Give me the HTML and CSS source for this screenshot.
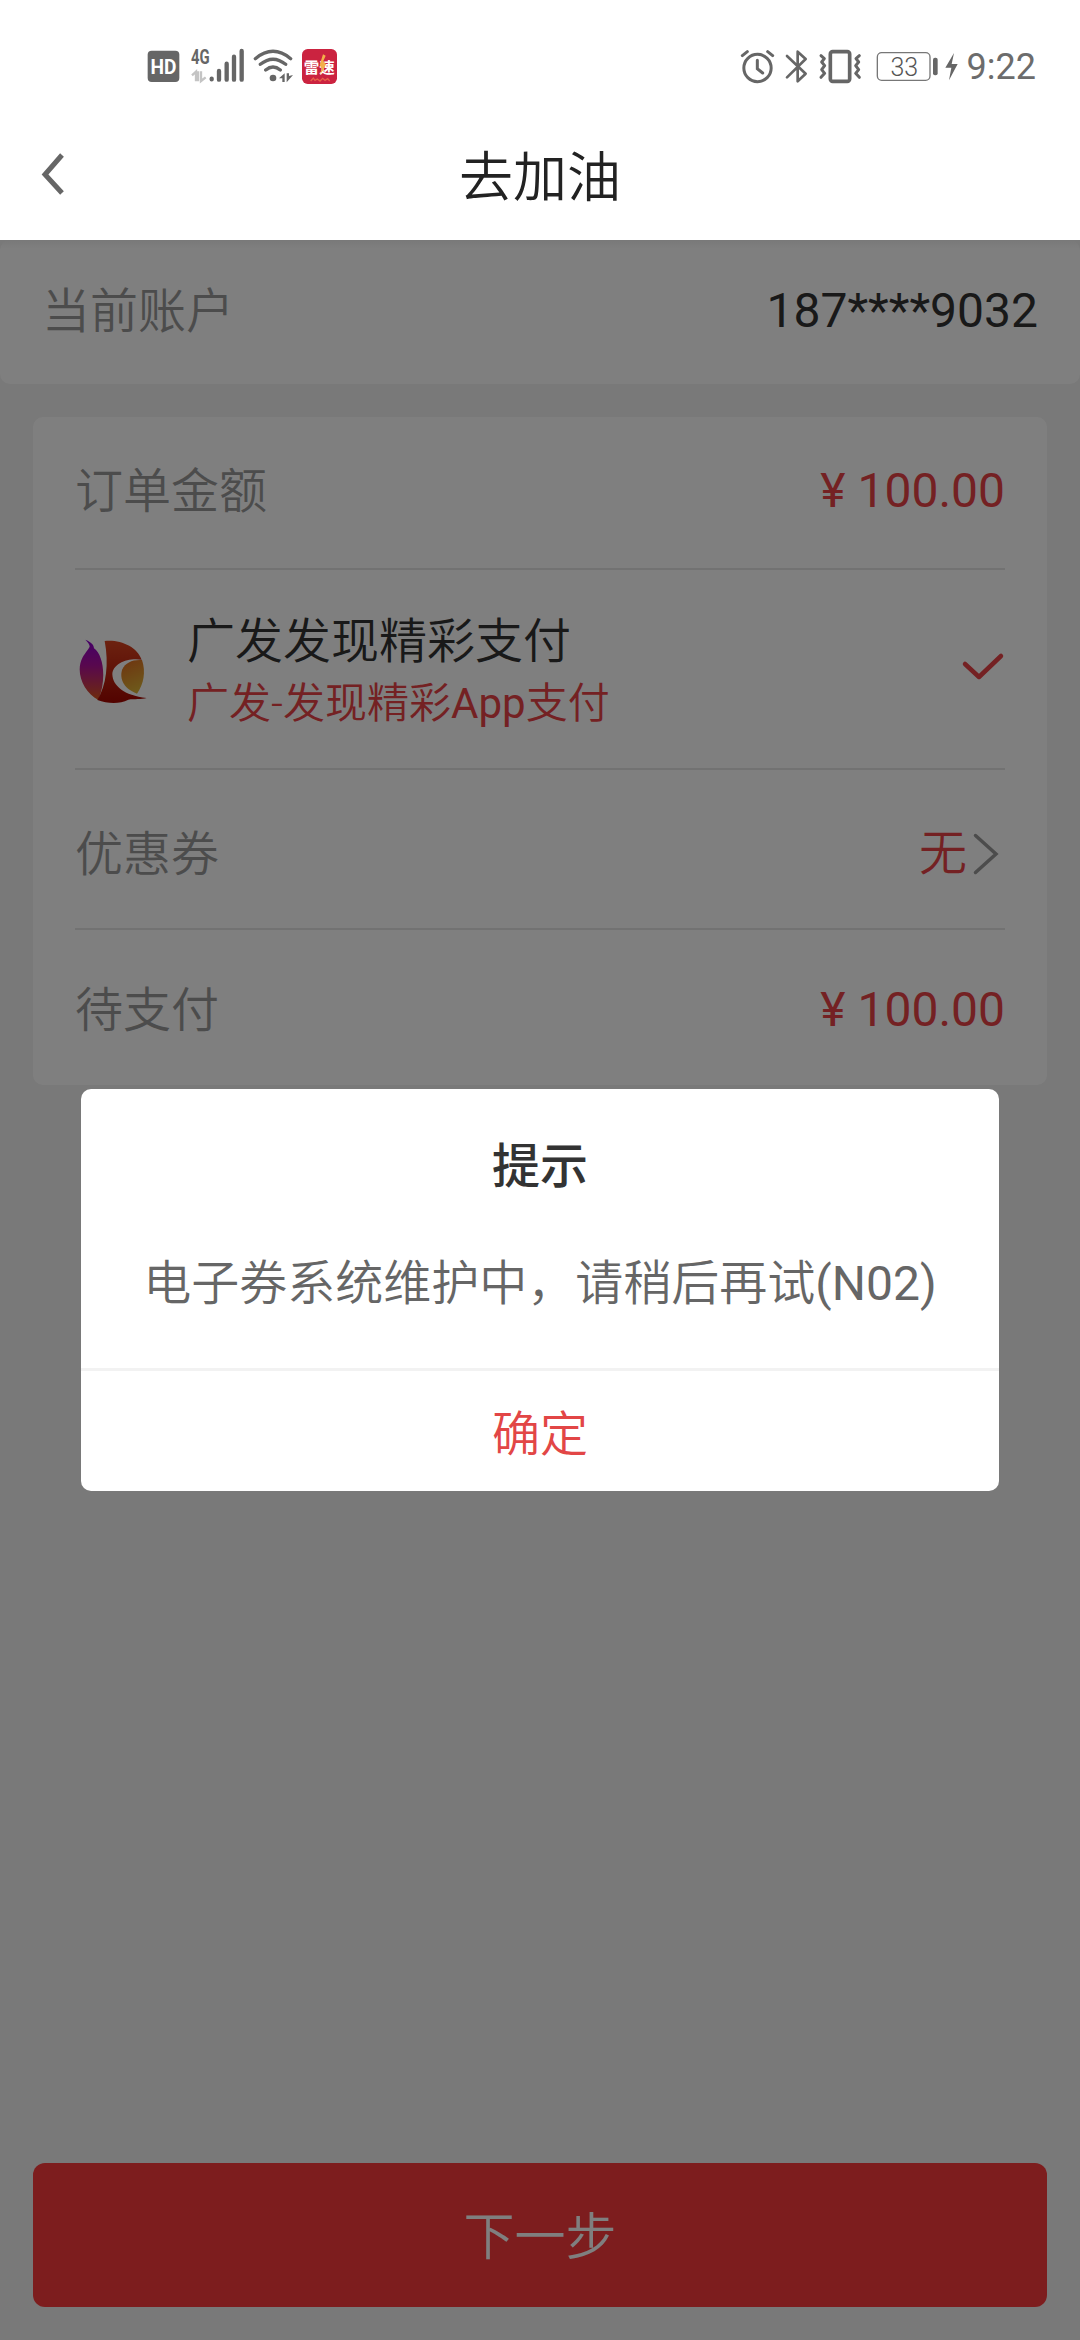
FILE: index.html
```html
<!DOCTYPE html>
<html lang="zh-CN">
<head>
<meta charset="utf-8">
<title>去加油</title>
<link rel="stylesheet" href="styles.css">
</head>
<body>
<div class="page">
  <header class="header">
    <div class="status">
      <div class="status-left">
        <svg width="33" height="40" viewBox="51 48 99 120">
          <rect x="53" y="62" width="95" height="94" rx="12" fill="#666"/>
          <text x="100.500" y="132" class="hd" textLength="78" lengthAdjust="spacingAndGlyphs">HD</text>
        </svg>
        <svg class="signal" width="56" height="40" viewBox="180 48 168 120">
          <text x="183" y="101" class="net" textLength="56" lengthAdjust="spacingAndGlyphs">4G</text>
          <path d="M186 136l12-11v29M204 124v30M213 124v29l14-11" fill="none" stroke="#c4c4c4" stroke-width="7"/>
          <path d="M245 146v2M267 123v26M290 101v48M312 80v69M335 63v86" stroke="#666" stroke-width="13" stroke-linecap="round"/>
        </svg>
        <svg class="wifi" width="41" height="40" viewBox="369 48 123 120">
          <g fill="none" stroke="#666" stroke-width="10" stroke-linecap="round"><path d="M376 86Q429 42 482 86M391 103Q429 72 467 103M407 120Q429 102 451 120"/></g>
          <circle cx="429" cy="144" r="10" fill="#666"/>
          <path d="M447 145l17-15v26h-7v-11zM470 130h7v8l12-3-19 22z" fill="#666"/>
        </svg>
        <svg class="app" width="37" height="40" viewBox="513 48 111 120">
          <rect x="516" y="57" width="105" height="105" rx="17" fill="#cb2340"/>
          <text x="521" y="130" class="app-name" textLength="93" lengthAdjust="spacingAndGlyphs">雷速</text>
          <path d="M579 73l8 4-7 16 8 10-8 17-10 13 5-17-6-11z" fill="#f3b04a"/>
          <path d="M542 153l8-9 5 7 7-4 8 6 8-8 7 6 8-5 6 7" fill="none" stroke="#e8604a" stroke-width="4"/>
        </svg>
      </div>
      <div class="status-right">
        <svg width="35" height="40" viewBox="57 48 105 120">
          <g fill="none" stroke="#666" stroke-width="9" stroke-linecap="round"><circle cx="109.500" cy="114" r="41"/><path d="M109 91v25l16 13M64 77l15-12M155 77l-15-12"/></g>
        </svg>
        <svg class="bt" width="23" height="40" viewBox="192 48 69 120">
          <path d="M198 78l56 53-24 23V65l24 22-56 55" fill="none" stroke="#666" stroke-width="8" stroke-linecap="round" stroke-linejoin="round"/>
        </svg>
        <svg class="vibrate" width="44" height="40" viewBox="291 48 132 120">
          <g fill="none" stroke="#666" stroke-linejoin="round" stroke-linecap="round"><rect x="328" y="65" width="58" height="89" rx="7" stroke-width="11"/><path d="M300 77l10 9-8 10 9 11-9 12 9 11-11 12M415 77l-10 9 8 10-9 11 9 12-9 11 11 12" stroke-width="9"/></g>
        </svg>
        <svg class="battery" width="63" height="40" viewBox="465 48 189 120">
          <rect x="469" y="68" width="158" height="83" rx="13" fill="none" stroke="#777" stroke-width="4"/>
          <rect x="636" y="83" width="14" height="53" rx="6" fill="#666"/>
          <text x="550" y="137" class="level">33</text>
        </svg>
        <svg class="bolt" width="14" height="40" viewBox="672 48 42 120"><path d="M699 69l-26 44h18l-7 38 26-49h-18z" fill="#666"/></svg>
        <span class="time">9:22</span>
      </div>
    </div>
    <div class="nav">
      <svg class="back" width="26" height="44" viewBox="0 0 26 44"><path d="M22 3L5 22.500 22 41" fill="none" stroke="#666" stroke-width="5"/></svg>
      <h1 class="title">去加油</h1>
    </div>
  </header>

  <main class="content">
    <section class="account">
      <span class="label">当前账户</span>
      <span class="phone">187****9032</span>
    </section>
    <section class="order">
      <div class="row row-amount">
        <span class="label">订单金额</span>
        <span class="price">¥ 100.00</span>
      </div>
      <div class="row row-pay">
        <svg class="logo" width="72" height="68" viewBox="26 54 216 204">
          <defs>
            <linearGradient id="purple" x1="0" y1="0" x2="0" y2="1"><stop offset="0" stop-color="#8a00d0"/><stop offset=".42" stop-color="#b0109e"/><stop offset="1" stop-color="#dd5518"/></linearGradient>
            <linearGradient id="red" x1="0" y1="0" x2="0" y2="1"><stop offset="0" stop-color="#d94420"/><stop offset="1" stop-color="#a50600"/></linearGradient>
            <linearGradient id="gold" x1="0" y1="0" x2=".3" y2="1"><stop offset="0" stop-color="#de6820"/><stop offset="1" stop-color="#dcb035"/></linearGradient>
          </defs>
          <path d="M48 59C64 65 74 74 74 85C102 104 113 177 87 240C43 217 16 156 40 112C48 98 60 86 61 79C60 72 55 66 48 59z" fill="url(#purple)"/>
          <path d="M106 63C154 58 203 80 217 119C178 112 130 129 129 163C130 197 164 227 232 234C216 239 195 236 177 239C150 253 115 251 84 240C111 196 119 132 106 63z" fill="url(#red)"/>
          <path d="M218 120C230 155 223 193 203 221C159 205 150 172 159 148C168 128 190 118 218 120z" fill="url(#gold)"/>
        </svg>
        <div class="method">
          <span class="method-name">广发发现精彩支付</span>
          <span class="method-note">广发-发现精彩<span class="latin">App</span>支付</span>
        </div>
        <svg class="check" width="44" height="30" viewBox="0 0 44 30"><path d="M4 12l14 13L40 4" fill="none" stroke="#e94346" stroke-width="4.500" stroke-linecap="round" stroke-linejoin="round"/></svg>
      </div>
      <div class="row row-coupon">
        <span class="label">优惠券</span>
        <span class="coupon">无<svg width="26" height="42" viewBox="0 0 26 42"><path d="M2.500 2.500L23 21 2.500 39.500" fill="none" stroke="#999" stroke-width="3.500" stroke-linecap="round"/></svg></span>
      </div>
      <div class="row row-due">
        <span class="label">待支付</span>
        <span class="price">¥ 100.00</span>
      </div>
    </section>
    <button class="next">下一步</button>

    <div class="mask">
      <div class="dialog" role="dialog">
        <h2 class="dialog-title">提示</h2>
        <p class="dialog-text">电子券系统维护中，请稍后再试<span class="latin">(N02)</span></p>
        <button class="confirm">确定</button>
      </div>
    </div>
  </main>
</div>
</body>
</html>
```
FILE: styles.css
```css
* { box-sizing: border-box; }
body {
  margin: 0;
  font-family: Roboto, "Noto Sans CJK SC", sans-serif;
  font-size: 48px;
  font-weight: 400;
  color: #333;
}
svg { display: block; flex: none; }
h1, h2, p { margin: 0; font-weight: 400; }
button { border: 0; padding: 0; font-family: inherit; }
.label, .title, .method-name, .method-note, .coupon, .dialog-text, .confirm, .next { font-weight: 350; }
.latin { font-weight: 400; }

.page { display: flex; flex-direction: column; width: 1080px; height: 2340px; overflow: hidden; }

.header { height: 240px; background: #fff; }
.status {
  display: flex;
  justify-content: space-between;
  height: 112px;
  padding: 46px 44px 0 147px;
}
.status-left, .status-right { display: flex; height: 40px; }
.signal { margin-left: 10px; }
.wifi, .app { margin-left: 7px; }
.bt, .vibrate { margin-left: 10px; }
.battery { margin-left: 14px; }
.bolt { margin-left: 6px; }
.time { margin-left: 8px; font-size: 36px; line-height: 43px; color: #6c6c6c; }
.hd { font: 700 62px Roboto, sans-serif; fill: #fff; text-anchor: middle; }
.net { font: 700 60px Roboto, sans-serif; fill: #666; }
.app-name { font: 700 46px "Noto Sans CJK SC", sans-serif; fill: #fff; }
.level { font: 300 75px Roboto, sans-serif; fill: #555; text-anchor: middle; }

.nav {
  display: grid;
  grid-template-columns: 1fr auto 1fr;
  align-items: center;
  height: 128px;
  padding: 0 40px;
}
.back { margin-top: -4px; }
.title { padding-top: 6px; font-size: 54px; line-height: 80px; color: #222; }

.content {
  position: relative;
  display: flex;
  flex-direction: column;
  flex: 1;
  background: #f2f2f2;
}
.account {
  display: flex;
  align-items: center;
  justify-content: space-between;
  height: 144px;
  padding: 0 42px 2px;
  border-radius: 10px;
  background: linear-gradient(#f2f2f2, #fff 9px);
}
.label { padding-top: 2px; color: #999; line-height: 72px; }
.phone { color: #333; line-height: 72px; }

.order {
  height: 668px;
  margin: 33px 33px 0;
  padding: 0 42px;
  border-radius: 10px;
  background: #fff;
}
.row {
  display: flex;
  align-items: center;
  justify-content: space-between;
  border-bottom: 2px solid #e4e4e4;
}
.row-amount { height: 153px; padding-bottom: 4px; }
.row-pay { height: 200px; }
.row-coupon { height: 160px; padding-top: 9px; }
.row-due { height: 155px; padding-top: 4px; border: 0; }
.price { color: #e94346; }
.logo { margin: 6px 0 0 3px; }
.method { display: flex; flex-direction: column; flex: 1; margin-left: 37px; padding-top: 4px; }
.method-name { line-height: 66px; }
.method-note { font-size: 42px; line-height: 58px; color: #e94346; }
.check { margin: -4px 0 0; }
.coupon { display: flex; align-items: center; gap: 6px; margin-right: 6px; line-height: 72px; color: #e94346; }

.next {
  height: 144px;
  margin: auto 33px 33px;
  padding-bottom: 5px;
  border-radius: 12px;
  background: #fa3a3c;
  color: #fff;
  font-size: 51px;
}

.mask {
  position: absolute;
  inset: 0;
  display: flex;
  align-items: center;
  justify-content: center;
  background: rgba(0, 0, 0, .5);
}
.dialog {
  display: flex;
  flex-direction: column;
  width: 918px;
  height: 402px;
  border-radius: 10px;
  background: #fff;
  text-align: center;
}
.dialog-title { padding-top: 42px; font-size: 48px; line-height: 72px; font-weight: 500; }
.dialog-text { flex: 1; padding-top: 45px; line-height: 72px; color: #666; white-space: nowrap; }
.confirm {
  height: 123px;
  padding-bottom: 3px;
  border-top: 3px solid #f2f2f2;
  background: none;
  color: #e24646;
  font-size: 48px;
}
```
